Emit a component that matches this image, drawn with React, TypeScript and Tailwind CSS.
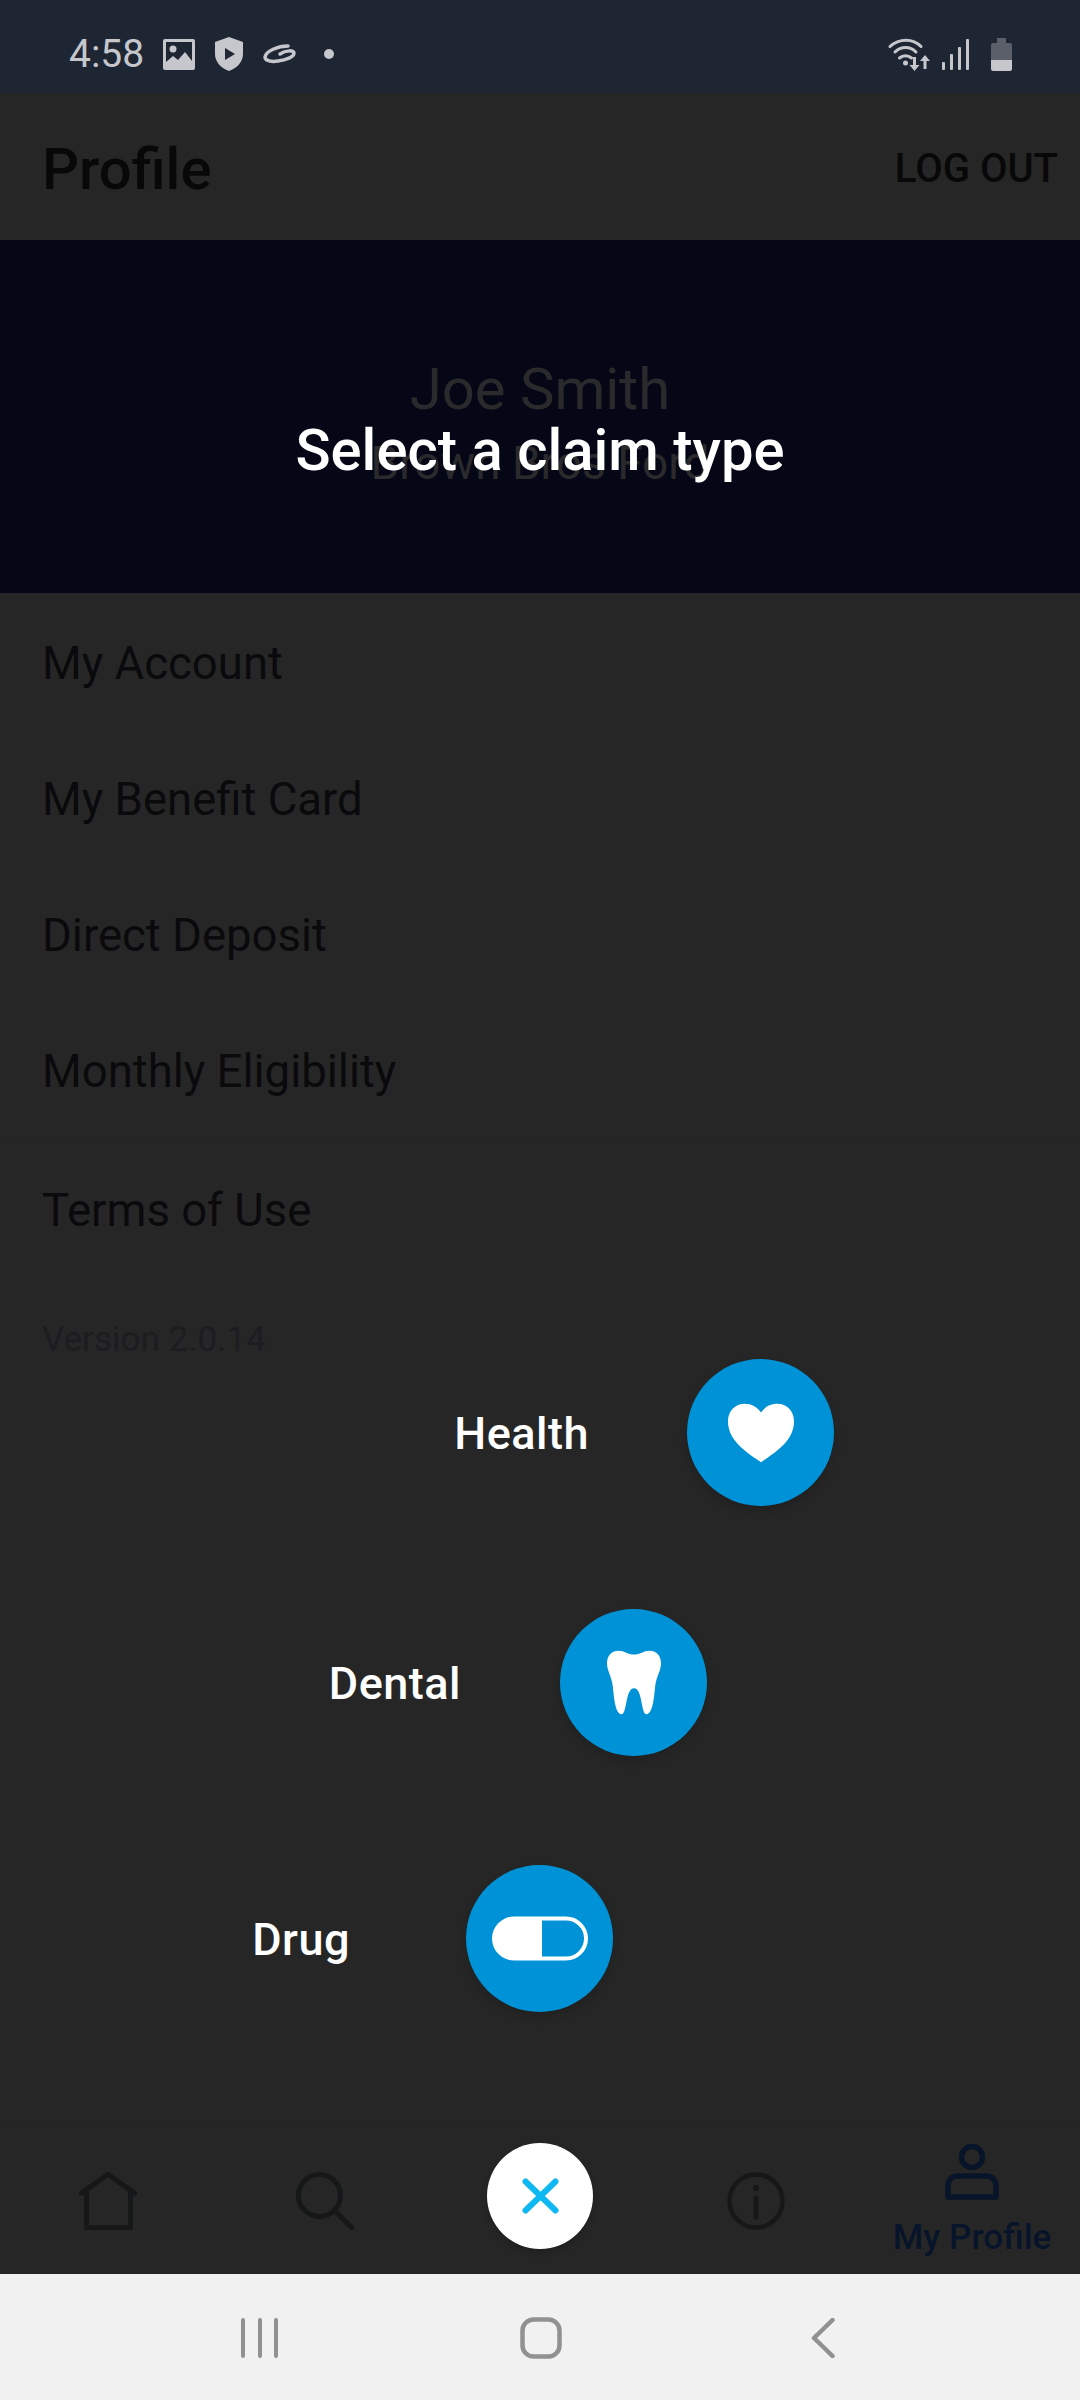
import React from "react";

const font = { fontFamily: "Roboto, sans-serif" };
const rowText = "text-[45.5px] leading-none text-[#0a0a0c]";

function Row({ label }: { label: string }) {
  return <div className={`h-[136px] flex items-center ${rowText}`}>{label}</div>;
}

function ClaimOption({
  label,
  className,
  children,
}: {
  label: string;
  className: string;
  children: React.ReactNode;
}) {
  return (
    <div className={`flex items-center justify-end ${className}`}>
      <span className="text-white text-[45px] leading-[50px] font-medium tracking-[0.5px] translate-y-[1px]">{label}</span>
      <div className="w-[147px] h-[147px] rounded-full bg-[#0092d6] flex items-center justify-center shadow-[0_5px_10px_rgba(0,0,0,0.15)]">
        {children}
      </div>
    </div>
  );
}

export default function App() {
  return (
    <div className="relative w-[1080px] h-[2400px] overflow-hidden bg-[#262626] flex flex-col" style={font}>
      {/* status bar */}
      <div className="h-[93px] shrink-0 bg-[#1f2633] flex items-center justify-between pl-[69px] pr-[68px] pt-[15px] text-[#c5c7cc]">
        <div className="flex items-center">
          <span className="text-[39px] leading-none w-[74px] font-normal">4:58</span>
          <svg className="ml-[20px]" width="32" height="31" viewBox="0 0 32 31">
            <path fill="#c5c7cc" fillRule="evenodd" d="M2 0h28a2 2 0 0 1 2 2v27a2 2 0 0 1-2 2H2a2 2 0 0 1-2-2V2a2 2 0 0 1 2-2Zm1 3v25h26V3Z" />
            <circle cx="10" cy="10" r="3.500" fill="#c5c7cc" />
            <path fill="#c5c7cc" d="M3 28v-5l7-6 5 4 7-8 7 9v6Z" />
          </svg>
          <svg className="ml-[20px]" width="28" height="34" viewBox="0 0 28 34">
            <path fill="#c5c7cc" fillRule="evenodd" d="M14 0 28 5v12c0 8-6 14-14 17C6 31 0 25 0 17V5Zm-4 11v12l10-6Z" />
          </svg>
          <svg className="ml-[20px]" width="33" height="20" viewBox="0 0 33 20">
            <path fill="none" stroke="#c5c7cc" strokeWidth="3.500" strokeLinecap="round" d="M25 2C15 2 3 7 2 13c0 4 7 5 13 4 8-1 16-4 16-8 0-3-8-3-14 1" />
          </svg>
          <span className="ml-[28px] w-[10px] h-[10px] rounded-full bg-[#c5c7cc]" />
        </div>
        <div className="flex items-center">
          <svg width="43" height="33" viewBox="0 0 43 33">
            <g fill="none" stroke="#c5c7cc" strokeWidth="3" strokeLinecap="round">
              <path d="M2 8.500C11 0 25 0 33 8.500" />
              <path d="M7 14C13 8 22 8 28 14" />
              <path d="M11.500 20C15 17 20 17 23.500 20" />
            </g>
            <circle cx="17.500" cy="25" r="2.500" fill="#c5c7cc" />
            <path fill="#c5c7cc" d="M25 19h3v8h3.500L26.500 33l-5-6H25ZM37 17l5 6h-3.500v8h-3v-8H32Z" />
          </svg>
          <svg className="ml-[11px]" width="27" height="31" viewBox="0 0 27 31">
            <g fill="#c5c7cc">
              <rect x="0" y="23" width="3" height="8" rx="1" />
              <rect x="8" y="15" width="3" height="16" rx="1" />
              <rect x="16" y="8" width="3" height="23" rx="1" />
              <rect x="24" y="0" width="3" height="31" rx="1" />
            </g>
          </svg>
          <svg className="ml-[22px]" width="21" height="33" viewBox="0 0 21 33">
            <path fill="#5b5f69" d="M6 0h9v5h4a2 2 0 0 1 2 2v15H0V7a2 2 0 0 1 2-2h4Z" />
            <path fill="#c5c7cc" d="M0 22h21v9a2 2 0 0 1-2 2H2a2 2 0 0 1-2-2Z" />
          </svg>
        </div>
      </div>

      {/* header */}
      <div className="h-[147px] shrink-0 flex items-center justify-between pl-[42px] pr-[22px] pt-[5px] text-[#080808]">
        <h1 className="text-[58px] leading-none font-medium">Profile</h1>
        <span className="text-[40px] leading-none font-medium">LOG OUT</span>
      </div>

      {/* banner */}
      <div className="h-[353px] shrink-0 bg-[#050716] flex flex-col items-center pt-[116px] text-[#2a2a2c]">
        <div className="text-[58px] leading-[66px] font-normal">Joe Smith</div>
        <div className="text-[46px] leading-[60px] font-normal mt-[11px]">Brown Bros Ford</div>
      </div>

      {/* list */}
      <div className="flex-1 pt-[3px]">
        <div className="pl-[42px]">
          <Row label="My Account" />
          <Row label="My Benefit Card" />
          <Row label="Direct Deposit" />
        </div>
        <div className="pl-[42px] border-b border-[#232323]">
          <Row label="Monthly Eligibility" />
        </div>
        <div className="pl-[42px]">
          <div className={`h-[140px] flex items-center ${rowText}`}>Terms of Use</div>
          <div className="mt-[39px] text-[35px] leading-[40px] text-[#1c1d20]">Version 2.0.14</div>
        </div>
      </div>

      {/* bottom tab bar */}
      <div className="h-[147px] shrink-0 border-t border-[#242424] grid grid-cols-5 justify-items-center">
        <div className="pt-[44px]">
          <svg width="58" height="58" viewBox="0 0 58 58" fill="none" stroke="#161718" strokeWidth="5" strokeLinejoin="round" strokeLinecap="round">
            <path d="M2.500 21 29 2.500 55.500 21" />
            <path d="M7.500 18V55.500H51.500V18" strokeLinecap="butt" strokeLinejoin="miter" />
          </svg>
        </div>
        <div className="pt-[44px] pl-[1px]">
          <svg width="58" height="58" viewBox="0 0 58 58" fill="none" stroke="#161718" strokeWidth="5" strokeLinecap="round">
            <circle cx="23.500" cy="23.500" r="21" />
            <path d="M39 39 55.500 55.500" />
          </svg>
        </div>
        <div className="pt-[15px]">
          <div className="w-[106px] h-[106px] rounded-full bg-white flex items-center justify-center shadow-[0_3px_6px_rgba(0,0,0,0.2)]">
            <svg width="37" height="36" viewBox="0 0 37 36" fill="none" stroke="#10b8f3" strokeWidth="6" strokeLinecap="round">
              <path d="M3.500 3.500 33.500 32.500M33.500 3.500 3.500 32.500" />
            </svg>
          </div>
        </div>
        <div className="pt-[44px]">
          <svg width="58" height="58" viewBox="0 0 58 58" fill="none" stroke="#161718" strokeWidth="4.500" strokeLinecap="round">
            <circle cx="29" cy="29" r="26.500" />
            <path d="M29 26v19" strokeWidth="5" />
            <circle cx="29" cy="16" r="3" fill="#161718" stroke="none" />
          </svg>
        </div>
        <div className="pt-[16px] flex flex-col items-center">
          <svg width="54" height="56" viewBox="0 0 54 56" fill="none" stroke="#08142a" strokeWidth="5.500" strokeLinejoin="round">
            <circle cx="27" cy="13" r="10.500" />
            <path d="M3 53V42c0-6 4-10 10-10h28c6 0 10 4 10 10v11Z" />
          </svg>
          <span className="text-[35px] leading-[40px] mt-[18px] font-medium text-[#08142a] whitespace-nowrap">My Profile</span>
        </div>
      </div>

      {/* system nav */}
      <div className="h-[126px] shrink-0 bg-[#f1f1f1] flex items-center pl-[241px] pt-[1px]">
        <svg width="38" height="40" viewBox="0 0 38 40" fill="#919191">
          <rect x="0" y="0" width="4" height="40" rx="2" />
          <rect x="17" y="0" width="4" height="40" rx="2" />
          <rect x="33" y="0" width="4" height="40" rx="2" />
        </svg>
        <svg className="ml-[241px]" width="42" height="42" viewBox="0 0 42 42" fill="none" stroke="#919191" strokeWidth="4.500">
          <rect x="2.500" y="2.500" width="37" height="37" rx="11" />
        </svg>
        <svg className="ml-[249px]" width="24" height="40" viewBox="0 0 24 40" fill="none" stroke="#919191" strokeWidth="4.500" strokeLinecap="round" strokeLinejoin="round">
          <path d="M21.500 2 3 20l18.500 18" />
        </svg>
      </div>

      {/* overlay */}
      <div className="absolute inset-0 flex flex-col pt-[418px]">
        <div className="text-center text-white text-[58px] leading-[64px] font-medium">Select a claim type</div>
        <ClaimOption label="Health" className="mt-[877px] pr-[246px] gap-[98px]">
          <svg width="68" height="60" viewBox="0 0 70 60">
            <path fill="#fff" d="M35 60C18 49 1 37 1 18 1 7 9 0 18 0c7 0 13 3 17 9C39 3 45 0 52 0c9 0 17 7 17 18 0 19-17 31-34 42Z" />
          </svg>
        </ClaimOption>
        <ClaimOption label="Dental" className="mt-[103px] pr-[373px] gap-[99px]">
          <svg width="54" height="65" viewBox="0 0 56 66">
            <path fill="#fff" d="M12 0c6 0 10 4 16 4s10-4 16-4c8 0 12 6 12 13 0 8-5 14-6 24-1 8-2 29-9 29-6 0-4-27-13-27s-7 27-13 27C8 66 7 45 6 37 5 27 0 21 0 13 0 6 4 0 12 0Z" />
          </svg>
        </ClaimOption>
        <ClaimOption label="Drug" className="mt-[109px] pr-[467px] gap-[116px]">
          <svg width="96" height="45" viewBox="0 0 96 44">
            <path fill="#fff" d="M22 0h28v44H22a22 22 0 0 1 0-44Z" />
            <path fill="none" stroke="#fff" strokeWidth="4" d="M50 2h24a20 20 0 0 1 0 40H50" />
          </svg>
        </ClaimOption>
      </div>
    </div>
  );
}
